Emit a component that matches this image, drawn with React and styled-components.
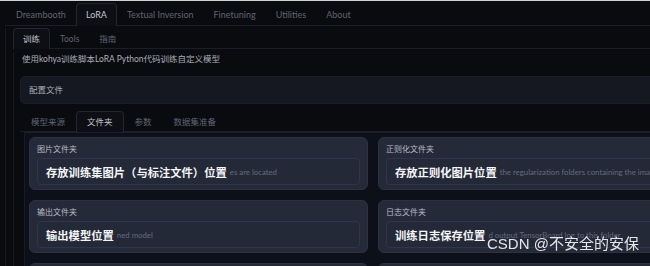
import React from "react";
import styled, {createGlobalStyle} from "styled-components";

const GlobalStyle = createGlobalStyle`
  html, body {
    margin: 0;
    padding: 0;
    background: #0a0b0f;
    overflow: hidden;
  }
  body {
    border-top: 1px solid #cfd0d2;
    font-family: Lato, "Noto Sans", "Noto Sans CJK SC", sans-serif;
  }
`

const Page = styled.div`
  width: 740px;
  height: 265px;
  padding-left: 5px;
  box-sizing: border-box;
  background: #0a0b0f;
`

const TabNav = styled.div`
  display: flex;
  margin-top: ${p => p.$top}px;
  padding-left: ${p => p.$left || 0}px;
  border-bottom: 1px solid #1b1e27;
`

const Tab = styled.div`
  height: ${p => p.$h}px;
  line-height: ${p => p.$h}px;
  padding: 0 ${p => p.$pad}px;
  font-size: ${p => p.$size}px;
  color: ${p => p.$active ? "#c3c6ce" : "#5f6473"};
  border: 1px solid ${p => p.$active ? "#23262f" : "transparent"};
  border-bottom: none;
  border-radius: 4px 4px 0 0;
  background: ${p => p.$active ? "#0d0f14" : "transparent"};
  margin-bottom: -1px;
  white-space: nowrap;
`

const TopPanel = styled.div`
  border-left: 1px solid #171a22;
  padding-left: 7px;
`

const SubPanel = styled.div`
  border-left: 1px solid #171a22;
  padding-left: 6px;
`

const Description = styled.div`
  margin-top: 4px;
  padding-left: 2px;
  height: 12px;
  line-height: 12px;
  font-size: 8.5px;
  color: #a9adb7;
`

const Accordion = styled.div`
  margin-top: 11px;
  height: 26px;
  line-height: 26px;
  padding-left: 8px;
  background: #151821;
  border: 1px solid #1a1e28;
  border-radius: 5px;
  font-size: 8.5px;
  color: #a9adb7;
`

const InnerPanel = styled.div`
  background: #0d1018;
  border-top: 1px solid #1a1f2e;
  border-left: 1px solid #171b27;
  padding: 4px 8px 0 4px;
  margin-left: 4px;
  height: 200px;
`

const Grid = styled.div`
  display: grid;
  grid-template-columns: 339px 339px;
  grid-auto-rows: 53px;
  gap: 10px;
`

const Card = styled.div`
  box-sizing: border-box;
  background: #252a39;
  border: 1px solid #2d3243;
  border-radius: 6px;
  padding: 5px 7px 0;
`

const Label = styled.div`
  height: 12px;
  line-height: 12px;
  font-size: 8px;
  color: #b9bdc6;
  margin-bottom: 3px;
`

const InputBox = styled.div`
  display: flex;
  align-items: center;
  gap: 3px;
  height: 27px;
  box-sizing: border-box;
  padding-left: 8px;
  background: #242938;
  border: 1px solid #30364a;
  border-radius: 4px;
  overflow: hidden;
  white-space: nowrap;
`

const Filled = styled.span`
  font-family: "Noto Sans CJK SC", sans-serif;
  font-weight: 700;
  font-size: 11.3px;
  color: #f4f5f7;
`

const Placeholder = styled.span`
  font-size: 7.8px;
  color: #636a7c;
`

const Watermark = styled.div`
  position: fixed;
  left: 487px;
  top: 232px;
  font-family: "Liberation Sans", "Noto Sans CJK SC", sans-serif;
  font-size: 15px;
  color: rgba(255, 255, 255, 0.88);
  white-space: nowrap;
`

const topTabs = ["Dreambooth", "LoRA", "Textual Inversion", "Finetuning", "Utilities", "About"];
const subTabs = ["训练", "Tools", "指南"];
const innerTabs = ["模型来源", "文件夹", "参数", "数据集准备"];

const folders = [
    {label: "图片文件夹", value: "存放训练集图片（与标注文件）位置", tail: "es are located"},
    {label: "正则化文件夹", value: "存放正则化图片位置", tail: "the regularization folders containing the images are located"},
    {label: "输出文件夹", value: "输出模型位置", tail: "ned model"},
    {label: "日志文件夹", value: "训练日志保存位置", tail: "d output TensorBoard log to this folder"},
    {label: "", value: "", tail: ""},
    {label: "", value: "", tail: ""},
];

const App = () => {
    return <Page>
        <GlobalStyle/>
        <TabNav $top={2} $left={1}>
            {topTabs.map(t => <Tab key={t} $h={22} $pad={9} $size={9} $active={t === "LoRA"}>{t}</Tab>)}
        </TabNav>
        <TopPanel>
            <TabNav $top={2}>
                {subTabs.map(t => <Tab key={t} $h={20} $pad={9} $size={8.5} $active={t === "训练"}>{t}</Tab>)}
            </TabNav>
            <SubPanel>
                <Description>使用kohya训练脚本LoRA Python代码训练自定义模型</Description>
                <Accordion>配置文件</Accordion>
                <TabNav $top={7}>
                    {innerTabs.map(t => <Tab key={t} $h={20} $pad={10} $size={8.5} $active={t === "文件夹"}>{t}</Tab>)}
                </TabNav>
                <InnerPanel>
                    <Grid>
                        {folders.map((f, index) => <Card key={index}>
                            <Label>{f.label}</Label>
                            <InputBox>
                                <Filled>{f.value}</Filled>
                                <Placeholder>{f.tail}</Placeholder>
                            </InputBox>
                        </Card>)}
                    </Grid>
                </InnerPanel>
            </SubPanel>
        </TopPanel>
        <Watermark>CSDN @不安全的安保</Watermark>
    </Page>
}

export default App;
